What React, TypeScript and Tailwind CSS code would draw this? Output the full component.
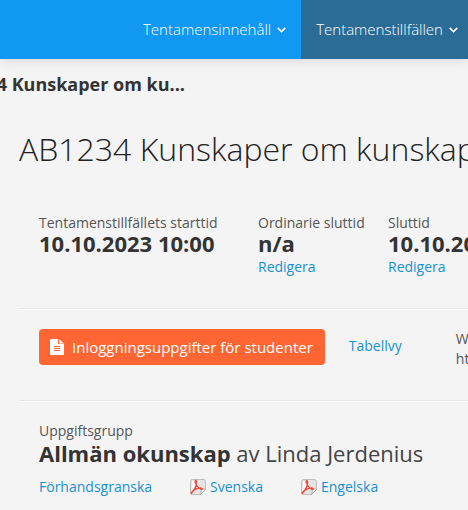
import React from "react";

interface NavItemProps {
  label: string;
  active?: boolean;
}

interface ExamTime {
  label: string;
  value: string;
  editable: boolean;
  widthClass: string;
}

const times: ExamTime[] = [
  { label: "Tentamenstillfällets starttid", value: "10.10.2023 10:00", editable: false, widthClass: "w-[219px]" },
  { label: "Ordinarie sluttid", value: "n/a", editable: true, widthClass: "w-[130px]" },
  { label: "Sluttid", value: "10.10.2023 14:00", editable: true, widthClass: "w-[219px]" },
];

function NavItem({ label, active }: NavItemProps) {
  return (
    <button
      type="button"
      className={`flex h-[59px] shrink-0 items-center gap-[6px] px-[15px] text-[15px] font-light text-white ${
        active ? "bg-[#2a6c96]" : ""
      }`}
    >
      {label}
      <svg width="9" height="6" viewBox="0 0 9 6" fill="none" stroke="currentColor" strokeWidth="1.6" aria-hidden="true">
        <path d="M0.7 0.9 4.5 4.6 8.3 0.9" />
      </svg>
    </button>
  );
}

function DocumentIcon() {
  return (
    <svg width="14" height="16" viewBox="0 0 14 16" aria-hidden="true">
      <path fill="#fff" d="M1 0h7v5h6v10a1 1 0 0 1-1 1H1a1 1 0 0 1-1-1V1a1 1 0 0 1 1-1zM9 0l5 4.500H9z" />
      <path stroke="#ff6633" d="M4 7.500h6M4 9.500h6M4 11.500h6" />
    </svg>
  );
}

function PdfIcon() {
  return (
    <svg width="16" height="16" viewBox="0 0 16 16" fill="none" aria-hidden="true">
      <path d="M2.500.5h11a2 2 0 0 1 2 2v8l-5 5h-8a2 2 0 0 1-2-2v-11a2 2 0 0 1 2-2z" fill="#e4e4e4" stroke="#bdbdbd" />
      <path d="M2 1.500h8L4 14H1.500z" fill="#f6f6f6" />
      <path d="M15.500 10.500c-1.500-.6-3-.5-4.500 0 .4 1.500.3 3.500-.5 5z" fill="#fff" stroke="#999" strokeWidth=".8" />
      <path
        d="M.8 15C3 12.500 5.800 8.500 6.500 5 6.900 3 6.500 1.300 5.700 1.300S4.800 3 6 5c1.300 2.600 3.200 4.800 5.300 5.300 1.100.2 1.200-1 0-1.200C8 8.600 3.500 10.500 1 14"
        stroke="#ee4a38"
        strokeWidth="1.300"
      />
    </svg>
  );
}

export default function App() {
  return (
    <div className="min-h-screen overflow-hidden bg-[#f4f4f4] font-['Open_Sans',sans-serif] text-[#333]">
      <header className="bg-[#1098f2] shadow-[0_0_12px_rgba(0,0,0,0.15)]">
        <nav className="flex pl-32">
          <NavItem label="Tentamensinnehåll" />
          <NavItem label="Tentamenstillfällen" active />
        </nav>
      </header>

      <div className="flex w-[185px] justify-end overflow-hidden pt-3 text-lg leading-[26px] font-bold whitespace-nowrap">
        AB1234 Kunskaper om ku...
      </div>

      <main className="pl-[19px]">
        <h1 className="mt-7 text-[32px] leading-[48px] font-light whitespace-nowrap text-[#222]">
          AB1234 Kunskaper om kunskap
        </h1>

        <section className="flex h-[136px] border-b border-[#e6e6e6] pt-10 pl-5 whitespace-nowrap shadow-[0_1px_0_#fff]">
          {times.map((time) => (
            <div key={time.label} className={`shrink-0 ${time.widthClass}`}>
              <div className="text-sm leading-5 text-[#555]">{time.label}</div>
              <div className="mb-1 text-[22px] leading-5 font-bold">{time.value}</div>
              {time.editable && (
                <a href="#redigera" className="block text-sm leading-5 text-[#1990d0]">
                  Redigera
                </a>
              )}
            </div>
          ))}
        </section>

        <section className="flex h-[92px] items-start border-b border-[#e6e6e6] pt-5 pl-5 whitespace-nowrap shadow-[0_1px_0_#fff]">
          <button
            type="button"
            className="flex h-9 shrink-0 items-center gap-2 rounded bg-[#ff6633] pr-3 pl-[11px] text-[15px] text-white"
          >
            <DocumentIcon />
            Inloggningsuppgifter för studenter
          </button>
          <a href="#tabellvy" className="mt-[7px] ml-6 shrink-0 text-sm leading-5 text-[#1990d0]">
            Tabellvy
          </a>
          <div className="ml-[54px] shrink-0 text-sm leading-5 text-[#555]">
            <div>Webbadress</div>
            <div>https://</div>
          </div>
        </section>

        <section className="pt-5 pl-5 whitespace-nowrap">
          <div className="text-sm leading-5 text-[#555]">Uppgiftsgrupp</div>
          <h2 className="text-[22px] leading-6 text-[#444]">
            <strong className="font-bold text-[#333]">Allmän okunskap</strong> av Linda Jerdenius
          </h2>
          <div className="mt-3 flex gap-[38px] text-sm leading-5 text-[#1990d0]">
            <a href="#forhandsgranska">Förhandsgranska</a>
            <a href="#svenska" className="flex items-center gap-1">
              <PdfIcon />
              Svenska
            </a>
            <a href="#engelska" className="flex items-center gap-1">
              <PdfIcon />
              Engelska
            </a>
          </div>
        </section>
      </main>
    </div>
  );
}
